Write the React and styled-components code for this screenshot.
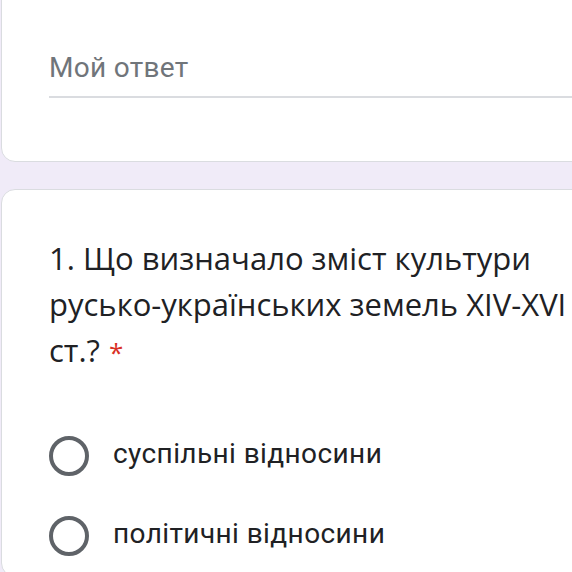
import styled, { createGlobalStyle } from 'styled-components';

const GlobalStyle = createGlobalStyle`
  body {
    margin: 0;
    background: #f0ebf8;
    overflow: hidden;
    font-family: Roboto, 'Liberation Sans', sans-serif;
  }
`;

const Page = styled.main`
  display: flex;
  flex-direction: column;
  gap: 27px;
  margin-top: -40px;
  padding-left: 1px;
`;

const Card = styled.section`
  width: 720px;
  background: #fff;
  border: 1px solid #dadce0;
  border-radius: 14px;
  padding: ${(props) => props.$pad};
  box-sizing: border-box;
`;

const AnswerInput = styled.div`
  font-family: Roboto, sans-serif;
  font-size: 28px;
  line-height: 32px;
  letter-spacing: 0.3px;
  color: #70757a;
  padding-bottom: 12px;
  border-bottom: 2px solid #dadce0;
`;

const Question = styled.div`
  font-family: 'Open Sans', sans-serif;
  font-size: 31px;
  line-height: 46px;
  color: #202124;
`;

const Required = styled.span`
  color: #d93025;
  font-size: 26px;
  margin-left: 9px;
`;

const Options = styled.div`
  display: flex;
  flex-direction: column;
  margin-top: 41px;
`;

const Option = styled.label`
  display: flex;
  align-items: center;
  gap: 24px;
  height: 80px;
  font-family: Roboto, sans-serif;
  font-size: 28px;
  letter-spacing: 0.4px;
  color: #202124;
`;

const OptionText = styled.span`
  padding-bottom: 6px;
`;

const Radio = styled.span`
  width: 40px;
  height: 40px;
  box-sizing: border-box;
  border: 4px solid #5f6368;
  border-radius: 50%;
  flex-shrink: 0;
`;

const options = ['суспільні відносини', 'політичні відносини'];

export default function App() {
  return (
    <>
      <GlobalStyle />
      <Page>
        <Card $pad="91px 0 63px 47px">
          <AnswerInput>Мой ответ</AnswerInput>
        </Card>
        <Card $pad="45px 0 0 47px">
          <Question>
            1. Що визначало зміст культури
            <br />
            русько-українських земель XIV-XVI
            <br />
            ст.?<Required>*</Required>
          </Question>
          <Options>
            {options.map((o) => (
              <Option key={o}>
                <Radio />
                <OptionText>{o}</OptionText>
              </Option>
            ))}
          </Options>
        </Card>
      </Page>
    </>
  );
}
